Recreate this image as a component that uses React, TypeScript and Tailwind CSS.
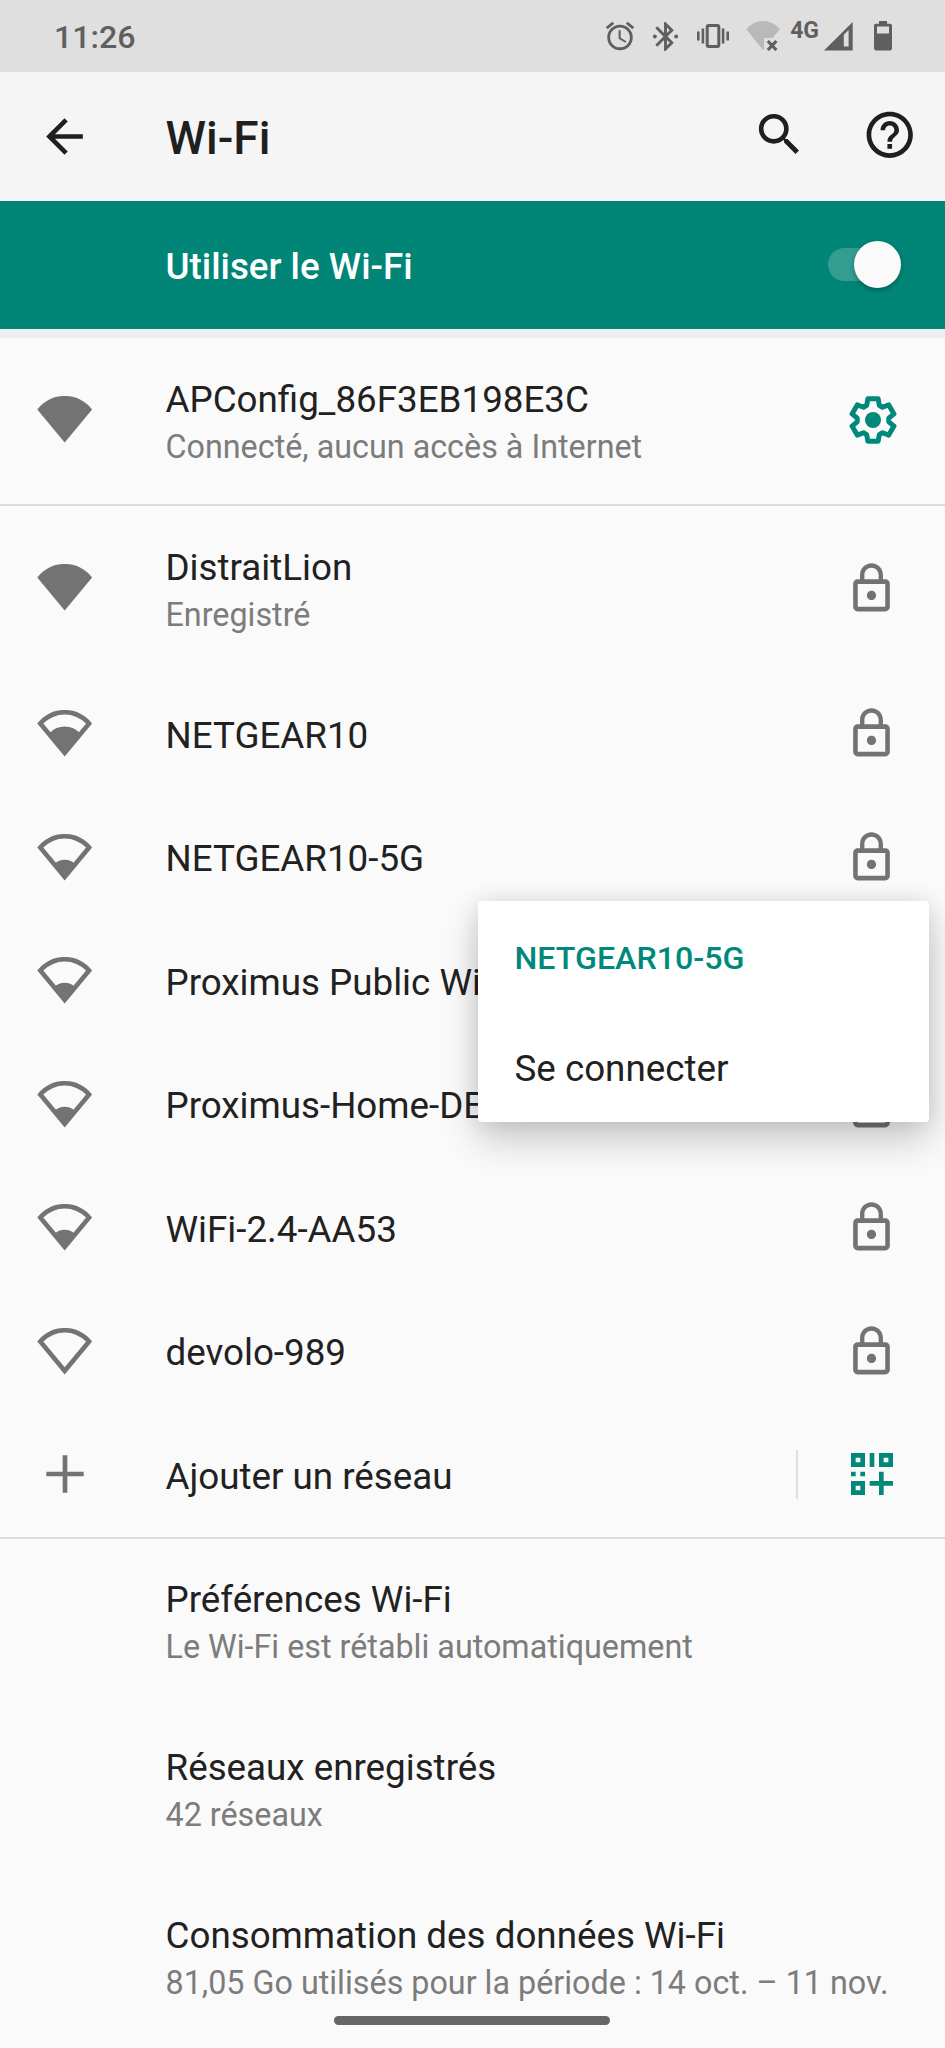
import React from 'react'
import { MdAccessAlarm, MdArrowBack, MdHelpOutline, MdLockOutline, MdSearch } from 'react-icons/md'

type Network = {
  name: string
  level: number
  status?: string
  secured: boolean
}

const networks: Network[] = [
  { name: 'DistraitLion', level: 4, status: 'Enregistré', secured: true },
  { name: 'NETGEAR10', level: 2, secured: true },
  { name: 'NETGEAR10-5G', level: 1, secured: true },
  { name: 'Proximus Public Wi-Fi', level: 1, secured: false },
  { name: 'Proximus-Home-DE78', level: 1, secured: true },
  { name: 'WiFi-2.4-AA53', level: 1, secured: true },
  { name: 'devolo-989', level: 0, secured: true },
]

const preferences = [
  { title: 'Préférences Wi-Fi', summary: 'Le Wi-Fi est rétabli automatiquement', height: 'h-[165px]' },
  { title: 'Réseaux enregistrés', summary: '42 réseaux', height: 'h-[170px]' },
  {
    title: 'Consommation des données Wi-Fi',
    summary: '81,05 Go utilisés pour la période : 14 oct. – 11 nov.',
    height: 'h-[166px]',
  },
]

// outline of the gear, one tooth every 60 degrees
const gearPoints = [0, 60, 120, 180, 240, 300]
  .flatMap((deg) => {
    const a = (deg * Math.PI) / 180
    return [[-6.3, -14.6], [-5.2, -21.2], [5.2, -21.2], [6.3, -14.6]].map(
      ([x, y]) => `${(x * Math.cos(a) - y * Math.sin(a)).toFixed(2)},${(x * Math.sin(a) + y * Math.cos(a)).toFixed(2)}`
    )
  })
  .join(' ')

const GearIcon = () => (
  <svg className="mr-[2px] h-12 w-12 text-[#00897b]" viewBox="-24 -24 48 48">
    <polygon points={gearPoints} fill="none" stroke="currentColor" strokeWidth="5" strokeLinejoin="round" />
    <circle r="8" fill="currentColor" />
  </svg>
)

const WifiIcon = ({ level }: { level: number }) => (
  <svg className="h-12 w-14 text-[#737373]" viewBox="0 0 56 48" fill="currentColor">
    {level === 4 ? (
      <path d="M.3 13.5A34.5 34.5 0 0 1 55.1 13.5L27.7 46.5z" />
    ) : (
      <path
        fillRule="evenodd"
        d="M.3 13.5A34.5 34.5 0 0 1 55.1 13.5L27.7 46.5zM6.3 13.6L27.7 39.3 49.1 13.6A29.9 29.9 0 0 0 6.3 13.6z"
      />
    )}
    {level === 2 && <path d="M12 23.5A21 21 0 0 1 43.4 23.5L27.7 43z" />}
    {level === 1 && <path d="M17.5 30A14.5 14.5 0 0 1 37.9 30L27.7 43z" />}
  </svg>
)

const QrAddIcon = () => (
  <svg className="-mr-[1.5px] h-[56px] w-[56px] text-[#00897b]" viewBox="0 0 24 24" fill="currentColor">
    <path fillRule="evenodd" d="M3 3h6v6H3zM5 5v2h2V5zM15 3h6v6h-6zM17 5v2h2V5zM3 15h6v6H3zM5 17v2h2v-2z" />
    <path d="M11 3h2v6h-2zM3 11h2v2H3zM7 11h2v2H7zM15 11h2v4h4v2h-4v4h-2v-4h-4v-2h4z" />
  </svg>
)

const StatusBar = () => (
  <div className="flex h-[72px] shrink-0 items-center bg-[#dfdfdf] pl-[54px] text-[#5f5f5f]">
    <span className="pt-0.5 text-[32.2px] leading-10 font-medium">11:26</span>
    <MdAccessAlarm className="mr-[11px] ml-auto h-[34px] w-[34px]" />
    <svg className="mr-[14px] h-[35px] w-[35px]" viewBox="0 0 24 24" fill="currentColor">
      <path d="M17.71 7.71L12 2h-1v7.59L6.41 5 5 6.41 10.59 12 5 17.59 6.41 19 11 14.41V22h1l5.71-5.71-4.3-4.29 4.3-4.29zM13 5.83l1.88 1.88L13 9.59V5.83zm1.88 10.46L13 18.17v-3.76l1.88 1.88z" />
      <circle cx="4.7" cy="12" r="1.35" />
      <circle cx="19.3" cy="12" r="1.35" />
    </svg>
    <svg className="mr-[17px] h-[32px] w-[32px]" viewBox="0 0 32 32" fill="currentColor">
      <rect x="10.2" y="5.6" width="11.6" height="20.8" rx="1.5" fill="none" stroke="currentColor" strokeWidth="3" />
      <path d="M0 11.5h2.6v9H0zM4.600 8.500h2.600v15H4.600zM24.800 8.500h2.600v15h-2.600zM29.400 11.500H32v9h-2.600z" />
    </svg>
    <svg className="mr-[9px] h-[30px] w-[35px]" viewBox="0 0 35 30">
      <path fill="#b9b9b9" d="M.3 8.2A21.5 21.5 0 0 1 33.9 8.2L26.5 17H18v11.2L17 29z" />
      <path stroke="#5f5f5f" strokeWidth="3.2" fill="none" d="M21.8 20l8.6 9M30.4 20l-8.6 9" />
    </svg>
    <span className="mr-[5px] pb-[11px] text-[23px] leading-6 font-bold">4G</span>
    <svg className="mr-[21px] h-[29px] w-[29px]" viewBox="0 0 29 29" fill="currentColor">
      <path fillRule="evenodd" d="M0 28.6L28.7 0v28.6zM19.8 12.7v11.9h4.8V7.9z" />
    </svg>
    <svg className="mr-[53px] h-[30px] w-[18px]" viewBox="0 0 18 30" fill="currentColor">
      <path
        fillRule="evenodd"
        d="M5 0h8v2.8h3.2A1.8 1.8 0 0 1 18 4.6v23a1.8 1.8 0 0 1-1.8 1.8H1.8A1.8 1.8 0 0 1 0 27.6V4.6A1.8 1.8 0 0 1 1.8 2.8H5zM3 5.6v7h12v-7z"
      />
    </svg>
  </div>
)

type RowProps = {
  title: string
  summary?: string
  icon?: React.ReactNode
  action?: React.ReactNode
  height: string
}

const Row: React.FC<RowProps> = ({ title, summary, icon, action, height }) => {
  return (
    <div className={`flex shrink-0 items-center ${height}`}>
      <div className={`w-[165.5px] shrink-0 pl-[36.5px] ${summary ? 'pb-0.5' : 'pt-px'}`}>{icon}</div>
      <div className={`flex-1 whitespace-nowrap ${summary ? 'pt-0.5' : 'pt-1'}`}>
        <div className="text-[36.75px] leading-[50px] text-[#212121]">{title}</div>
        {summary && <div className="text-[32.3px] leading-[44px] text-[#7c7c7c]">{summary}</div>}
      </div>
      {action && (
        <div className={`flex shrink-0 items-center pr-[46.5px] ${summary ? 'pb-0.5' : ''}`}>{action}</div>
      )}
    </div>
  )
}

const Divider = () => <div className="h-0.5 shrink-0 bg-[#dcdcdc]" />

const NetworkMenu = () => (
  <div className="absolute top-[901px] left-[478px] h-[221px] w-[451px] rounded-[4px] bg-white pl-[36.5px] shadow-[0_18px_38px_rgba(0,0,0,0.2),0_0_22px_rgba(0,0,0,0.1)]">
    <div className="pt-[36px] text-[32.2px] leading-[42px] font-medium text-[#00897b]">NETGEAR10-5G</div>
    <div className="pt-[65px] text-[36.75px] leading-[50px] text-[#212121]">Se connecter</div>
  </div>
)

const App: React.FC = () => {
  return (
    <div className="relative flex h-[2048px] w-[945px] flex-col overflow-hidden bg-[#fafafa] font-['Roboto',sans-serif]">
      <StatusBar />

      <header className="flex h-[128.5px] shrink-0 items-center bg-[#f5f5f5] text-[#1f1f1f]">
        <div className="w-[165.5px] pl-[37px]">
          <MdArrowBack className="h-[55px] w-[55px]" />
        </div>
        <h1 className="flex-1 pt-1 text-[46px] leading-[54px] font-medium">Wi-Fi</h1>
        <MdSearch className="mr-[55px] mb-[3px] h-[55px] w-[55px]" />
        <MdHelpOutline className="mr-[28px] mb-[3px] h-[55.5px] w-[55.5px]" />
      </header>

      <div className="flex h-[128.5px] shrink-0 items-center bg-[#008577] pl-[165.5px] text-white">
        <span className="flex-1 pt-1 text-[36.75px] leading-[44px] font-medium">Utiliser le Wi-Fi</span>
        <div className="mr-[44px] flex h-[47px] w-[73px] items-center">
          <div className="h-[33px] w-[60px] rounded-full bg-white/20" />
          <div className="-ml-[33px] h-[47px] w-[47px] shrink-0 rounded-full bg-[#fafafa] shadow-[0_2px_5px_rgba(0,0,0,0.3)]" />
        </div>
      </div>
      <div className="h-[9px] shrink-0 bg-[#eeeeee]" />

      <Row
        title="APConfig_86F3EB198E3C"
        summary="Connecté, aucun accès à Internet"
        icon={<WifiIcon level={4} />}
        action={<GearIcon />}
        height="h-[166px]"
      />
      <Divider />

      {networks.map((network) => (
        <Row
          key={network.name}
          title={network.name}
          summary={network.status}
          icon={<WifiIcon level={network.level} />}
          action={network.secured && <MdLockOutline className="h-[55px] w-[55px] text-[#737373]" />}
          height={network.status ? 'h-[166px]' : 'h-[123.5px]'}
        />
      ))}

      <Row
        title="Ajouter un réseau"
        icon={
          <svg className="mb-[3px] h-[56px] w-[56px] text-[#737373]" viewBox="0 0 24 24" fill="currentColor">
            <path d="M11 4h2v7h7v2h-7v7h-2v-7H4v-2h7z" />
          </svg>
        }
        action={
          <>
            <div className="mr-[46px] h-[49px] w-0.5 bg-[#dedede]" />
            <div className="pb-0.5">
              <QrAddIcon />
            </div>
          </>
        }
        height="h-[123.5px]"
      />
      <Divider />

      {preferences.map((pref) => (
        <Row key={pref.title} title={pref.title} summary={pref.summary} height={pref.height} />
      ))}

      <NetworkMenu />
      <div className="absolute bottom-[23px] left-[334px] h-[9px] w-[276px] rounded-full bg-[#666666]" />
    </div>
  )
}

export default App
